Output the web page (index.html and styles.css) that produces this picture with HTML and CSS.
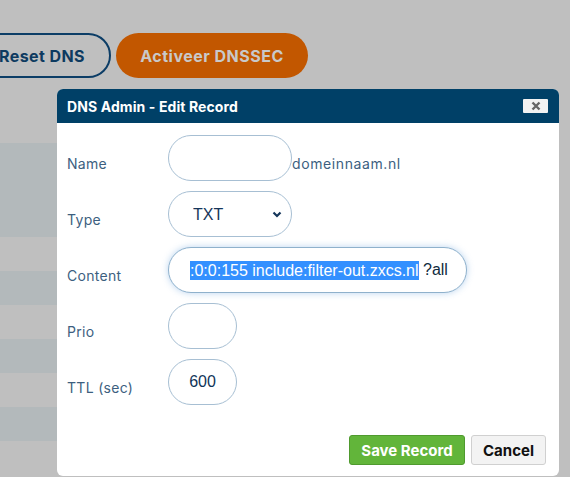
FILE: index.html
```html
<!DOCTYPE html>
<html>
<head>
<meta charset="utf-8">
<link rel="stylesheet" href="styles.css">
</head>
<body>
<div class="page">
  <div class="toolbar">
    <button class="btn-outline">Reset DNS</button>
    <button class="btn-orange">Activeer DNSSEC</button>
  </div>
  <div class="table">
    <div class="row stripe tall"></div>
    <div class="row"></div>
    <div class="row stripe"></div>
    <div class="row"></div>
    <div class="row stripe"></div>
    <div class="row"></div>
    <div class="row stripe"></div>
  </div>
</div>

<div class="modal">
  <div class="modal-header">
    <span class="modal-title">DNS Admin - Edit Record</span>
    <button class="close-btn" aria-label="close">
      <svg width="10" height="10" viewBox="0 0 10 10"><path d="M1.5 1.5 L8.5 8.5 M8.5 1.5 L1.5 8.5" stroke="#666" stroke-width="2.4" stroke-linecap="butt"/></svg>
    </button>
  </div>
  <div class="modal-body">
    <div class="form">
      <label class="label">Name</label>
      <div class="field">
        <input class="pill w-name" type="text" value="">
        <span class="suffix">domeinnaam.nl</span>
      </div>

      <label class="label">Type</label>
      <div class="field">
        <div class="select-wrap">
          <select class="pill w-name select"><option>TXT</option></select>
          <svg class="chev" width="10" height="7" viewBox="0 0 10 7"><path d="M1.5 1.5 L5 5 L8.5 1.5" fill="none" stroke="#15355a" stroke-width="2.2"/></svg>
        </div>
      </div>

      <label class="label">Content</label>
      <div class="field">
        <div class="pill w-content focus"><span class="sel">:0:0:155 include:filter-out.zxcs.nl</span><span class="rest">&nbsp;?all</span></div>
      </div>

      <label class="label">Prio</label>
      <div class="field">
        <input class="pill w-small" type="text" value="">
      </div>

      <label class="label">TTL (sec)</label>
      <div class="field">
        <input class="pill w-small center" type="text" value="600">
      </div>
    </div>
    <div class="footer">
      <button class="btn-save">Save Record</button>
      <button class="btn-cancel">Cancel</button>
    </div>
  </div>
</div>
</body>
</html>
```

FILE: styles.css
```css
* { box-sizing: border-box; }
html, body { margin: 0; padding: 0; }
body {
  background: #bfbfbf;
  width: 570px;
  height: 477px;
  overflow: hidden;
  font-family: Inter, "Open Sans", sans-serif;
}
.page { position: relative; }
.toolbar {
  display: flex;
  gap: 5px;
  padding-top: 33px;
  margin-left: -27px;
}
.btn-outline {
  height: 45px;
  width: 138px;
  border: 2px solid #0c3d66;
  border-radius: 23px;
  background: transparent;
  color: #0d3a60;
  font: 700 16px Inter, sans-serif;
  letter-spacing: 0.4px;
  padding: 0;
}
.btn-orange {
  height: 45px;
  width: 192px;
  border: none;
  border-radius: 23px;
  background: #c25700;
  color: #c9c9c9;
  font: 700 16px Inter, sans-serif;
  letter-spacing: 0.5px;
  padding: 0;
}
.table {
  margin-top: 65px;
  width: 555px;
}
.row { height: 34px; }
.row.tall { height: 94px; }
.stripe { background: #b3b9bb; }

.modal {
  position: absolute;
  left: 57px;
  top: 89px;
  width: 502px;
  height: 387px;
  background: #fff;
  border-radius: 6px;
  overflow: hidden;
  display: flex;
  flex-direction: column;
}
.modal-header {
  height: 34px;
  background: #004067;
  display: flex;
  align-items: center;
  justify-content: space-between;
  padding: 0 11px 0 10px;
}
.modal-title {
  color: #fff;
  font-weight: 700;
  font-size: 14px;
  letter-spacing: 0.1px;
  padding-top: 1px;
}
.close-btn {
  width: 25px;
  height: 14px;
  border: none;
  border-radius: 1px;
  background: #f2f2f2;
  padding: 0;
  display: flex;
  align-items: center;
  justify-content: center;
}
.modal-body {
  flex: 1;
  padding: 12px 13px 11px 10px;
  display: flex;
  flex-direction: column;
}
.form {
  display: grid;
  grid-template-columns: 101px 1fr;
  row-gap: 10px;
  align-items: center;
}
.label {
  font-size: 14px;
  color: #3d5f7f;
  letter-spacing: 0.3px;
  padding-top: 10px;
}
.field {
  display: flex;
  align-items: center;
  height: 46px;
}
.pill {
  height: 46px;
  border: 1px solid #a7bfd3;
  border-radius: 23px;
  background: #fff;
  font: 16px "Liberation Sans", Arial, sans-serif;
  color: #0f3458;
  padding: 0 20px;
  outline: none;
}
.w-name { width: 124px; }
.w-small { width: 69px; }
.w-content { width: 299px; }
.center { text-align: center; padding: 0; }
.suffix {
  font-size: 14px;
  color: #3d5f7f;
  letter-spacing: 0.6px;
  padding-top: 10px;
}
.select-wrap { position: relative; }
.select {
  appearance: none;
  -webkit-appearance: none;
  padding-left: 24px;
  color: #15355a;
  font-size: 16px;
}
.chev {
  position: absolute;
  right: 10px;
  top: 20px;
}
.focus {
  display: flex;
  align-items: center;
  white-space: pre;
  overflow: hidden;
  padding-left: 21px;
  border-color: #8fb1cc;
  box-shadow: 0 0 7px rgba(102, 160, 220, 0.45);
  font-size: 16px;
  color: #0f2a40;
}
.sel {
  background: #3390ff;
  color: #fff;
  line-height: 19px;
}
.footer {
  margin-top: auto;
  display: flex;
  justify-content: flex-end;
  gap: 6px;
}
.btn-save {
  width: 116px;
  height: 30px;
  border: 1px solid #4f9a2e;
  border-radius: 3px;
  background: #62b53a;
  color: #fff;
  font: 700 15px Inter, sans-serif;
}
.btn-cancel {
  width: 75px;
  height: 30px;
  border: 1px solid #d0d0d0;
  border-radius: 3px;
  background: #f3f3f3;
  color: #111;
  font: 700 15px Inter, sans-serif;
}
```
